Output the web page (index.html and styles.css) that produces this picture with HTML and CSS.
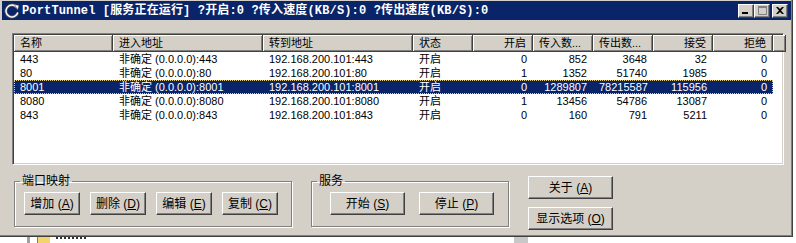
FILE: index.html
```html
<!DOCTYPE html>
<html lang="zh-CN">
<head>
    <meta charset="UTF-8">
    <title>PortTunnel</title>
    <link rel="stylesheet" href="styles.css">
</head>
<body>
    <div class="window">
        <div class="titlebar">
            <svg class="app-icon" width="16" height="16" viewBox="0 0 16 16">
                <path d="M12.6 4.2 A6 6 0 1 0 13.8 9.5" fill="none" stroke="#5a5a5a" stroke-width="3"/>
                <path d="M12.6 4.2 A6 6 0 1 0 13.8 9.5" fill="none" stroke="#ffffff" stroke-width="1.4"/>
                <path d="M10.5 1.5 L15 2.5 L13.5 7 Z" fill="#ffffff" stroke="#5a5a5a" stroke-width="0.6"/>
            </svg>
            <span class="title">PortTunnel [服务正在运行] ?开启:0 ?传入速度(KB/S):0 ?传出速度(KB/S):0</span>
            <div class="tb-btns">
                <span class="tb-btn">
                    <svg width="8" height="7" viewBox="0 0 8 7"><rect x="0" y="5" width="6" height="2" fill="#000"/></svg>
                </span>
                <span class="tb-btn">
                    <svg width="9" height="9" viewBox="0 0 9 9"><path d="M0.5 0.5 H8.5 V8.5 H0.5 Z" fill="none" stroke="#808080"/><rect x="0" y="0" width="9" height="2" fill="#808080"/></svg>
                </span>
                <span class="tb-btn close">
                    <svg width="8" height="7" viewBox="0 0 8 7"><path d="M0 0 H2 L4 2 L6 0 H8 L5 3.5 L8 7 H6 L4 5 L2 7 H0 L3 3.5 Z" fill="#000"/></svg>
                </span>
            </div>
        </div>

        <div class="list">
            <div class="lv-head">
                <div>名称</div>
                <div>进入地址</div>
                <div>转到地址</div>
                <div>状态</div>
                <div class="num">开启</div>
                <div>传入数...</div>
                <div>传出数...</div>
                <div class="num">接受</div>
                <div class="num">拒绝</div>
                <div></div>
            </div>
            <div class="lv-row">
                <span>443</span><span>非确定 (0.0.0.0):443</span><span>192.168.200.101:443</span><span>开启</span>
                <span class="num">0</span><span class="num">852</span><span class="num">3648</span><span class="num">32</span><span class="num">0</span>
            </div>
            <div class="lv-row">
                <span>80</span><span>非确定 (0.0.0.0):80</span><span>192.168.200.101:80</span><span>开启</span>
                <span class="num">1</span><span class="num">1352</span><span class="num">51740</span><span class="num">1985</span><span class="num">0</span>
            </div>
            <div class="lv-row sel">
                <span>8001</span><span>非确定 (0.0.0.0):8001</span><span>192.168.200.101:8001</span><span>开启</span>
                <span class="num">0</span><span class="num">1289807</span><span class="num">78215587</span><span class="num">115956</span><span class="num">0</span>
            </div>
            <div class="lv-row">
                <span>8080</span><span>非确定 (0.0.0.0):8080</span><span>192.168.200.101:8080</span><span>开启</span>
                <span class="num">1</span><span class="num">13456</span><span class="num">54786</span><span class="num">13087</span><span class="num">0</span>
            </div>
            <div class="lv-row">
                <span>843</span><span>非确定 (0.0.0.0):843</span><span>192.168.200.101:843</span><span>开启</span>
                <span class="num">0</span><span class="num">160</span><span class="num">791</span><span class="num">5211</span><span class="num">0</span>
            </div>
        </div>

        <div class="bottom">
            <fieldset class="group ports">
                <legend>端口映射</legend>
                <button class="btn small">增加 (<u>A</u>)</button>
                <button class="btn small">删除 (<u>D</u>)</button>
                <button class="btn small">编辑 (<u>E</u>)</button>
                <button class="btn small">复制 (<u>C</u>)</button>
            </fieldset>
            <fieldset class="group service">
                <legend>服务</legend>
                <button class="btn wide">开始 (<u>S</u>)</button>
                <button class="btn wide">停止 (<u>P</u>)</button>
            </fieldset>
            <div class="side">
                <button class="btn side-btn">关于 (<u>A</u>)</button>
                <button class="btn side-btn">显示选项 (<u>O</u>)</button>
            </div>
        </div>
    </div>

    <!-- bits of the desktop under the window -->
    <div class="desktop">
        <span class="d-bar"></span>
        <span class="d-folder"></span>
        <span class="d-text"></span>
        <span class="d-bar right"></span>
    </div>
</body>
</html>
```

FILE: styles.css
```css
body {
    margin: 0;
    background-color: #ffffff;
    font-family: "Liberation Sans", "Noto Sans CJK SC", sans-serif;
    font-size: 11px;
    color: #000;
}

.window {
    box-sizing: border-box;
    width: 793px;
    height: 237px;
    background-color: #d4d0c8;
    border-right: 1px solid #404040;
    border-bottom: 1px solid #404040;
    box-shadow: inset -1px -1px #808080;
    overflow: hidden;
}

/* Title bar */
.titlebar {
    display: flex;
    align-items: center;
    height: 19px;
    margin: 1px 1px 0 2px;
    background-color: #0a246a;
    color: #fff;
}

.app-icon {
    margin-left: 2px;
    flex: none;
}

.title {
    margin-left: 2px;
    font-family: "Liberation Mono", "Noto Sans CJK SC", monospace;
    font-weight: bold;
    font-size: 12px;
    line-height: 14px;
    letter-spacing: 0.15px;
    white-space: nowrap;
}

.tb-btns {
    display: flex;
    margin-left: auto;
    margin-right: 3px;
}

.tb-btn {
    box-sizing: border-box;
    width: 16px;
    height: 14px;
    display: flex;
    align-items: center;
    justify-content: center;
    background-color: #d4d0c8;
    border: 1px solid;
    border-color: #fff #404040 #404040 #fff;
    box-shadow: inset -1px -1px #808080;
}

.tb-btn.close {
    margin-left: 2px;
}

/* List view */
.list {
    box-sizing: border-box;
    width: 772px;
    height: 132px;
    margin: 13px 0 0 12px;
    background-color: #fff;
    border: 1px solid;
    border-color: #808080 #fff #fff #808080;
    box-shadow: inset 1px 1px #404040, inset -1px -1px #d4d0c8;
    padding: 1px;
}

.lv-head,
.lv-row {
    display: grid;
    grid-template-columns: 99px 150px 150px 60px 60px 60px 60px 60px 60px;
}

.lv-head {
    grid-template-columns: 99px 150px 150px 60px 60px 60px 60px 60px 60px 1fr;
    height: 17px;
}

.lv-head div {
    box-sizing: border-box;
    background-color: #d4d0c8;
    border-right: 1px solid #404040;
    border-bottom: 1px solid #404040;
    box-shadow: inset 1px 1px #fff, inset -1px -1px #808080;
    padding: 0 6px;
    line-height: 16px;
    white-space: nowrap;
    overflow: hidden;
}

.lv-row {
    width: 759px;
    height: 14px;
    line-height: 14px;
}

.lv-row span {
    padding: 0 6px;
    white-space: nowrap;
    overflow: hidden;
}

.num {
    text-align: right;
}

.lv-row.sel {
    background-color: #0a246a;
    color: #fff;
    outline: 1px dotted #e8cf7a;
    outline-offset: -1px;
}

/* Bottom controls */
.bottom {
    display: flex;
    align-items: flex-start;
    margin: 10px 0 0 14px;
}

.group {
    box-sizing: border-box;
    margin: 0;
    min-width: 0;
    border: 1px solid #808080;
    box-shadow: inset 1px 1px #fff, 1px 1px #fff;
    font-size: 12px;
    display: flex;
    gap: 10px;
    height: 52px;
}

.group legend {
    padding: 0 2px;
    line-height: 12px;
}

.ports {
    width: 278px;
    padding: 5px 0 0 9px;
}

.ports legend {
    margin-left: -4px;
}

.service {
    width: 198px;
    margin-left: 19px;
    padding: 5px 0 0 18px;
    gap: 14px;
}

.service legend {
    margin-left: -13px;
}

.btn {
    box-sizing: border-box;
    height: 23px;
    padding: 0;
    background-color: #d4d0c8;
    border: 1px solid;
    border-color: #fff #404040 #404040 #fff;
    box-shadow: inset -1px -1px #808080;
    font-family: "Liberation Sans", "Noto Sans CJK SC", sans-serif;
    font-size: 12px;
    line-height: 14px;
    color: #000;
    text-align: center;
    white-space: nowrap;
}

.btn.small {
    width: 56px;
}

.btn.wide {
    width: 75px;
}

.side {
    display: flex;
    flex-direction: column;
    gap: 8px;
    margin: 1px 0 0 19px;
}

.btn.side-btn {
    width: 85px;
}

/* Desktop strip */
.desktop {
    display: flex;
    align-items: flex-start;
    height: 6px;
    overflow: hidden;
}

.d-bar {
    width: 3px;
    height: 6px;
    margin-left: 27px;
    background-color: #a0a0a0;
}

.d-folder {
    width: 12px;
    height: 6px;
    margin-left: 7px;
    background-color: #f3d36b;
    border-left: 1px solid #9a7d2a;
}

.d-text {
    width: 30px;
    height: 3px;
    margin-left: 6px;
    border-top: 2px dotted #333;
}

.d-bar.right {
    width: 14px;
    margin-left: 428px;
    background-color: #c8c8c8;
}
```
